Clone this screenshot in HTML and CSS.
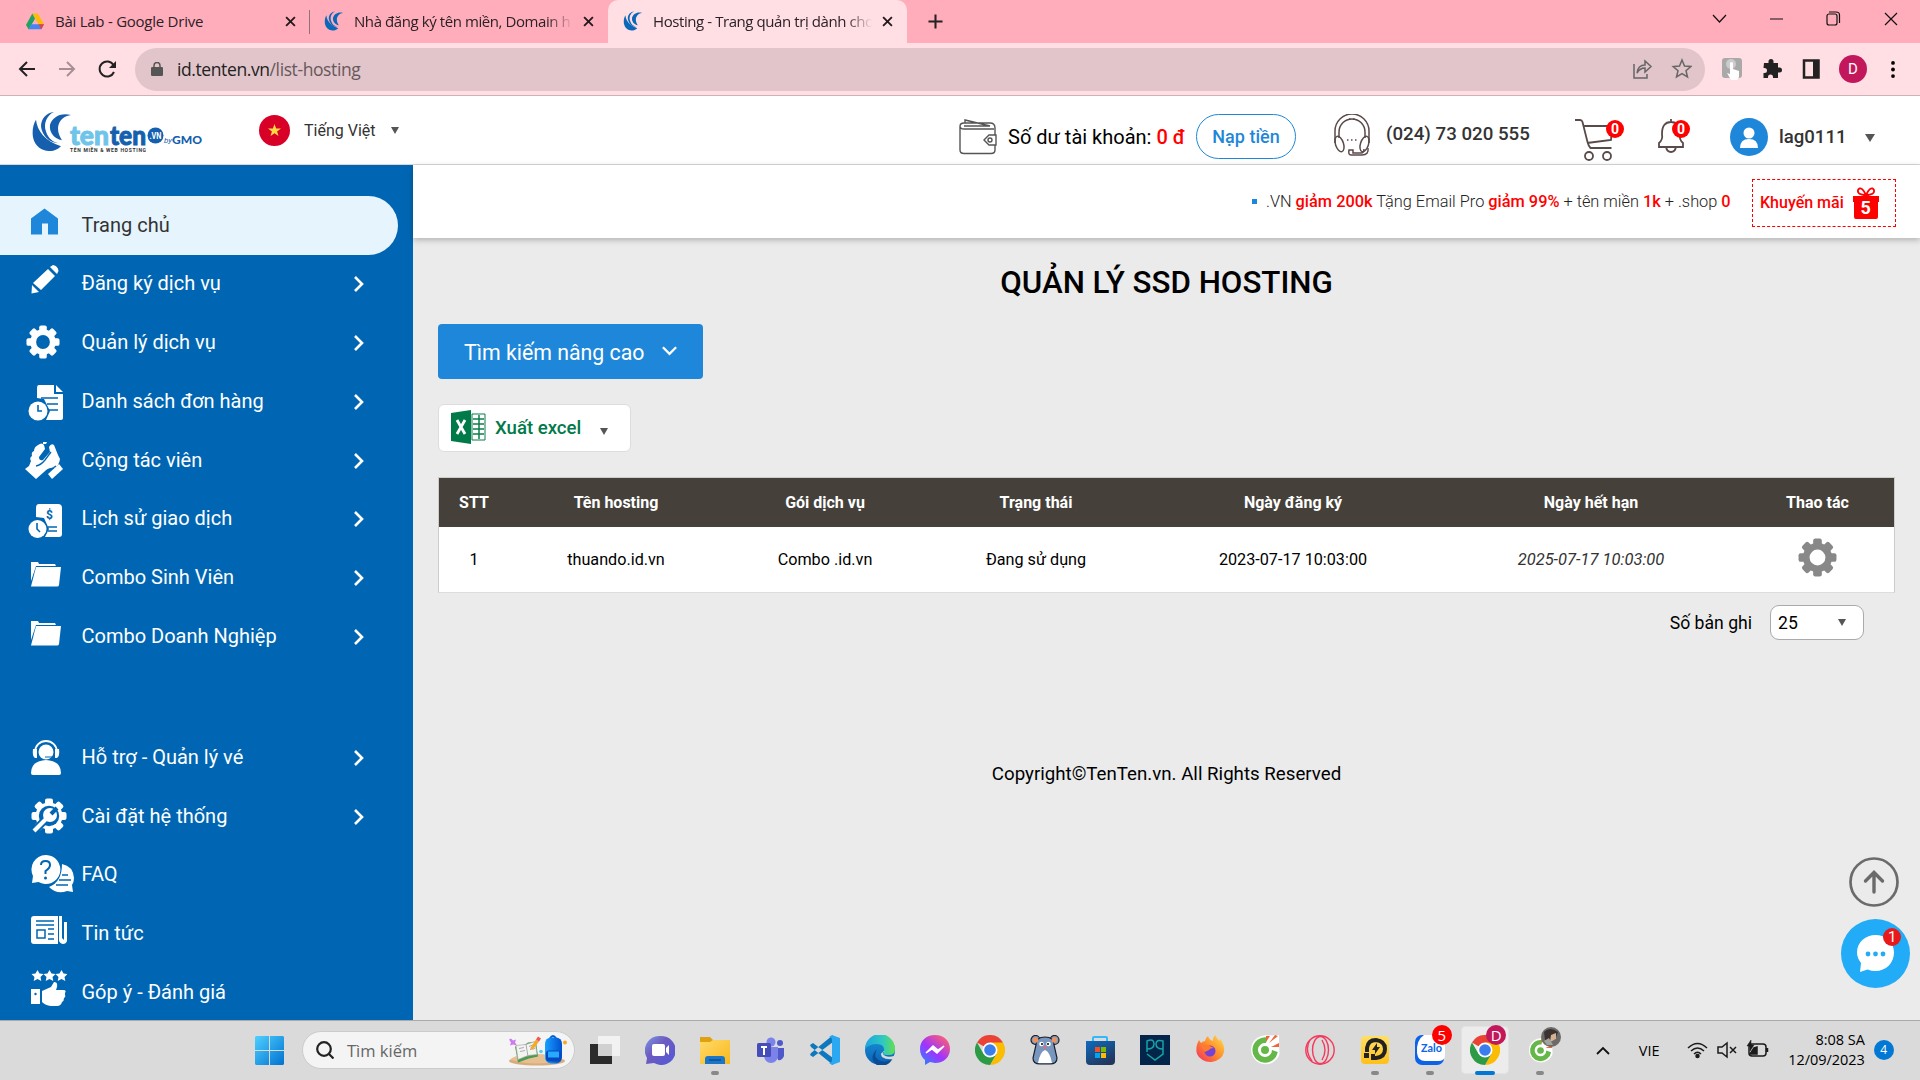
FILE: index.html
```html
<!DOCTYPE html>
<html lang="vi">
<head>
<meta charset="utf-8">
<title>Hosting - Trang quản trị dành cho khách hàng</title>
<link rel="stylesheet" href="styles.css">
</head>
<body>
<svg class="defs" aria-hidden="true">
  <defs>
    <symbol id="swoosh" viewBox="0 0 40 42"><path d="M22 1C15 4 11 13 14 21c2 7 7 11 13 12-10 0-17-8-18-17C9 8 14 2 22 1z"/><path d="M39 4c-9 1-13 8-13 14 0 5 2 9 4 12-8-2-13-8-12-16C20 7 28 1 39 4z"/><path d="M4 9c1 11 9 22 25 27C20 45 4 42 1 27 0 20 1 14 4 9z"/></symbol>
    <symbol id="x" viewBox="0 0 10 10"><path d="M1 1l8 8M9 1L1 9" fill="none" stroke="currentColor" stroke-width="1.7"/></symbol>
    <symbol id="chev" viewBox="0 0 12 18"><path d="M2 2l7 7-7 7" fill="none" stroke="currentColor" stroke-width="2.6"/></symbol>
    <symbol id="cog" viewBox="-18 -18 36 36"><rect x="-4" y="-17.500" width="8" height="35" rx="2"/><rect x="-4" y="-17.500" width="8" height="35" rx="2" transform="rotate(45)"/><rect x="-4" y="-17.500" width="8" height="35" rx="2" transform="rotate(90)"/><rect x="-4" y="-17.500" width="8" height="35" rx="2" transform="rotate(135)"/><circle r="13.500"/><circle r="7.300" fill="var(--hole)"/></symbol>
    <symbol id="folder" viewBox="0 0 30 25"><path d="M0 0h7l1 2h16l1 2H5L0 19z"/><path d="M5 5h25l-2 18q-.2 1.500-2 1.500H0z"/></symbol>
    <symbol id="chrome" viewBox="-15 -15 30 30"><path d="M0 0L-13 -7.500A15 15 0 0 1 13 -7.500z" fill="#ea4335"/><path d="M0 -7.500H13A15 15 0 0 1 0 15L6.500 3.700z" fill="#fbbc04"/><path d="M-6.500 3.700L-13 -7.500A15 15 0 0 0 0 15L6.500 3.700z" fill="#2d9a46"/><circle r="7.500" fill="#fff"/><circle r="5.800" fill="#3b7ded"/></symbol>
    <symbol id="coccoc" viewBox="-15 -15 30 30"><path d="M3-14.500A14.500 14.500 0 1 0 14.500 4L14-6V-15z" fill="#fff"/><path d="M2 -12.500A12.700 12.700 0 1 0 12.700 2L7 0a7 7 0 1 1-6-7z" fill="#65b847"/><circle r="6" fill="#fff"/><circle r="4" fill="#65b847"/><path d="M1-8l0-6 4 0zM4-7l6-8 3 1zM6-3l8-4v4z" fill="#f0663c"/></symbol>
    <linearGradient id="gWin" x2="1" y2="1"><stop stop-color="#4fd0ff"/><stop offset="1" stop-color="#0072d0"/></linearGradient>
    <linearGradient id="gChat" x2="1" y2="1"><stop stop-color="#7b9be4"/><stop offset=".4" stop-color="#6e5bc0"/><stop offset="1" stop-color="#5059d9"/></linearGradient>
    <linearGradient id="gFold" x2="1" y2="1"><stop stop-color="#ffda6a"/><stop offset="1" stop-color="#f9b81c"/></linearGradient>
    <linearGradient id="gMess" x1="0" y1="1" x2=".8" y2="0"><stop stop-color="#1e8cff"/><stop offset=".5" stop-color="#a033ff"/><stop offset="1" stop-color="#ff6070"/></linearGradient>
    <linearGradient id="gEdge" x2="1"><stop stop-color="#1ca5e0"/><stop offset=".6" stop-color="#2fc9c0"/><stop offset="1" stop-color="#64df50"/></linearGradient>
    <linearGradient id="gEdge2" x2="0" y2="1"><stop stop-color="#1a94d8"/><stop offset="1" stop-color="#0a62b5"/></linearGradient>
    <linearGradient id="gStore" x2=".6" y2="1"><stop stop-color="#0d6cc0"/><stop offset="1" stop-color="#22365e"/></linearGradient>
    <linearGradient id="gFox" x1="1" x2="0" y2="1"><stop stop-color="#ffe14a"/><stop offset=".5" stop-color="#ff8a2a"/><stop offset="1" stop-color="#f22a66"/></linearGradient>
    <linearGradient id="gLd" x2="0" y2="1"><stop stop-color="#ffe065"/><stop offset="1" stop-color="#ffc01a"/></linearGradient>
    <linearGradient id="gBag" x2="1"><stop stop-color="#18a0ff"/><stop offset="1" stop-color="#0050d0"/></linearGradient>
  </defs>
</svg>

<header class="browser">
  <div class="tabs">
    <div class="tab tab-first">
      <svg class="fav" viewBox="0 0 20 18"><path d="M7 0h6l7 12h-6z" fill="#fbbc04"/><path d="M7 0l3 6-7 12-3-5z" fill="#1ea362"/><path d="M6 12h14l-3 5.500H3z" fill="#4285f4"/><path d="M14 12h6l-3 5.500z" fill="#ea4335"/></svg>
      <span class="tab-title t1">Bài Lab - Google Drive</span><svg class="tab-x"><use href="#x"/></svg>
    </div>
    <div class="tab tab-second">
      <svg class="fav swoosh"><use href="#swoosh"/></svg>
      <span class="tab-title t2">Nhà đăng ký tên miền, Domain h</span><svg class="tab-x"><use href="#x"/></svg>
    </div>
    <div class="tab tab-active">
      <svg class="fav swoosh"><use href="#swoosh"/></svg>
      <span class="tab-title t3">Hosting - Trang quản trị dành cho</span><svg class="tab-x"><use href="#x"/></svg>
    </div>
    <svg class="new-tab" viewBox="0 0 16 16"><path d="M8 .5v15M.5 8h15" stroke="#222" stroke-width="2.200"/></svg>
    <svg class="win-btns" viewBox="0 0 190 20" fill="none" stroke="#111" stroke-width="1.200"><path d="M1 6l6.500 7L14 6M58 10h13M173 4l12 12M185 4l-12 12"/><rect x="115" y="5" width="10" height="11" rx="2"/><path d="M117 3h7q3.500 0 3.500 3v8"/></svg>
  </div>
  <div class="toolbar">
    <svg class="nav" viewBox="0 0 100 20" fill="none" stroke="#222" stroke-width="2"><path d="M17 10H2M9 3l-7 7 7 7"/><path d="M41 10h15M49 3l7 7-7 7" stroke="#a58f95"/><path d="M95.500 6A7.500 7.500 0 1 0 96 13"/><path d="M98 2v7h-7z" fill="#222" stroke="none"/></svg>
    <div class="omnibox">
      <svg class="lock" viewBox="0 0 12 14"><rect y="5" width="12" height="9" rx="1.200" fill="#555"/><path d="M3 6V3.500a3 3 0 0 1 6 0V6" fill="none" stroke="#555" stroke-width="1.500"/></svg>
      <span class="url">id.tenten.vn<i>/list-hosting</i></span>
      <svg class="omni-icons" viewBox="0 0 60 22" fill="none" stroke="#666" stroke-width="1.500"><path d="M2 6v14h13v-4M5 15q1-8 8-8V3l6 5.500-6 5.500v-4q-5 0-8 5z"/><path d="M50 2l2.500 6 6.300.5-4.800 4.200 1.500 6.300-5.500-3.400-5.500 3.400 1.500-6.300-4.800-4.200 6.300-.5z"/></svg>
    </div>
    <svg class="ext-icons" viewBox="0 0 110 28"><rect x="1" y="3" width="20" height="20" rx="3" fill="#a9a9a9"/><circle cx="10" cy="9" r="5" fill="#ccc"/><path d="M9 8q1.500-2 3 0v6l6 2v6l-2 3h-6l-4-7 3 1z" fill="#fff"/><path d="M43 8h4.500v-1.500a2.500 2.500 0 1 1 5 0V8H57v4.500h1.500a2.500 2.500 0 1 1 0 5H57V23h-5v-1a2.500 2.500 0 0 0-5 0v1h-4.500v-5h1a2.500 2.500 0 0 0 0-5h-1z" fill="#222"/><path d="M83 5.500h14.500v17H83z" fill="none" stroke="#222" stroke-width="2.500"/><path d="M92 5h6v18h-6z" fill="#222"/></svg>
    <span class="profile">D</span>
    <svg class="dots" viewBox="0 0 4 18"><circle cx="2" cy="2" r="2"/><circle cx="2" cy="9" r="2"/><circle cx="2" cy="16" r="2"/></svg>
  </div>
</header>

<div class="site-head">
  <svg class="logo" viewBox="0 0 172 42">
    <svg width="40" height="41" viewBox="0 0 40 42" preserveAspectRatio="none" fill="#155fae"><use href="#swoosh"/></svg>
    <text class="lg-a" x="38" y="34" textLength="39" lengthAdjust="spacingAndGlyphs">ten</text>
    <text class="lg-b" x="78" y="34" textLength="36" lengthAdjust="spacingAndGlyphs">ten</text>
    <circle cx="123.500" cy="24.500" r="8" fill="#155fae"/><text class="lg-vn" x="117.500" y="28" textLength="12" lengthAdjust="spacingAndGlyphs">.VN</text>
    <text class="lg-by" x="132" y="32" textLength="8">by</text><text class="lg-gmo" x="140" y="33" textLength="30" lengthAdjust="spacingAndGlyphs">GMO</text>
    <text class="lg-sub" x="38" y="40.500" textLength="76">TÊN MIỀN &amp; WEB HOSTING</text>
  </svg>
  <svg class="flag" viewBox="0 0 31 31"><circle cx="15.500" cy="15.500" r="15.500" fill="#d80027"/><path d="M15.500 9l1.600 4.600h4.900l-3.900 2.900 1.400 4.600-4-2.800-4 2.800 1.400-4.600L9 13.600h4.900z" fill="#ffda44"/></svg>
  <span class="lang">Tiếng Việt</span><i class="tri"></i>
  <div class="account">
    <svg class="wallet" viewBox="0 0 38 36" fill="none" stroke="#555" stroke-width="1.400"><path d="M36 16V9q0-5-5-5H5Q1 4 1 7.500V31q0 3.500 4 3.500h27q4 0 4-3.500v-5M1 7q0 3 4 3h30M6 4V1l25 6H5"/><path d="M37 16h-7q-5 5-5 5t5 5h7z"/><circle cx="31" cy="21" r="2"/></svg>
    <span class="balance">Số dư tài khoản: <b>0 đ</b></span>
    <span class="topup">Nạp tiền</span>
    <svg class="headset" viewBox="0 0 38 42" fill="none" stroke="#5a4a4a" stroke-width="1.500"><path d="M2 29V17a17 17 0 0 1 34 0v12M6 24v-6a13 13 0 0 1 26 0v6"/><ellipse cx="6.500" cy="30" rx="4" ry="8" transform="rotate(-18 6.500 30)"/><ellipse cx="31.500" cy="30" rx="4" ry="8" transform="rotate(18 31.500 30)"/><path d="M35 34q1 7-6 7H18q-3 0-2-5h4v3h8q3 0 3-4"/><path d="M14 26h11M16 5h7" stroke-dasharray="1.500 2.500"/></svg>
    <span class="phone">(024) 73 020 555</span>
    <span class="ico-badge cart"><svg viewBox="0 0 38 42" fill="none" stroke="#5a4a4a" stroke-width="1.800"><path d="M0 1h5q2 0 2.500 2l5 20q1 4 3 6h21M9 7h28l-1 14-24 3"/><circle cx="14" cy="37" r="4"/><circle cx="32" cy="37" r="4"/></svg><b>0</b></span>
    <span class="ico-badge bell"><svg viewBox="0 0 28 34" fill="none" stroke="#5a4a4a" stroke-width="1.800"><path d="M14 0v3M2 28v-4q4-3 3-9Q5 3 14 3t9 12q-1 6 3 9v4zM9 28q1 5 5 5t5-5"/></svg><b>0</b></span>
    <svg class="avatar" viewBox="0 0 38 38"><circle cx="19" cy="19" r="19" fill="#1f87d9"/><circle cx="19" cy="15" r="5.500" fill="#fff"/><path d="M10 30q0-9 9-9t9 9z" fill="#fff"/></svg>
    <span class="user">lag0111</span><i class="tri"></i>
  </div>
</div>

<div class="body">
  <nav class="side">
    <a class="item active"><svg width="27" height="27" class="i-home" viewBox="0 0 27 26"><path d="M13.500 0L27 10v16H17V15h-6v11H0V10z" fill="#1f87d9"/></svg><span>Trang chủ</span></a>
    <a class="item"><svg class="i-pen" width="28" height="29" viewBox="0 0 28 29"><path d="M2 18L17 4l7 7L10 25zM1 20l7 7-7.500 1.500zM19 2l3-2q5 1 5.500 6L26 9z"/></svg><span>Đăng ký dịch vụ</span><svg class="chev"><use href="#chev"/></svg></a>
    <a class="item"><svg class="i-gear" width="34" height="34"><use href="#cog"/></svg><span>Quản lý dịch vụ</span><svg class="chev"><use href="#chev"/></svg></a>
    <a class="item"><svg class="i-list" width="36" height="36" viewBox="0 0 36 36"><path d="M11 0h15v9h9v24q0 2-2 2H18l4-9-6-12-7-1V3q0-3 2-3zM28 0l7 7h-7z"/><circle cx="10" cy="26" r="9.500"/><path d="M10 20v6h4M13 13h17M19 19h11M21 25h9" stroke="#0066b3" stroke-width="1.600" fill="none"/></svg><span>Danh sách đơn hàng</span><svg class="chev"><use href="#chev"/></svg></a>
    <a class="item"><svg class="i-hands" width="38" height="38" viewBox="0 0 38 38"><path d="M13 3q4-3 6 0l1 4-6 8q0 4 4 3l7-8-1-5q2-4 5-2l4 10 2 4q-1 7-6 9-5-1-10 4l-8 7L0 27l4-3 2-5q-2-3 1-5-1-4 2-5 0-4 4-6z"/><path d="M34 22l4 5-11 10-4-5z"/><path d="M18 0l4 0-1 2-3 0z"/><path d="M11 24q5-1 9-6l6-8M22 30l9-6" stroke="#0066b3" stroke-width="1.300" fill="none"/></svg><span>Cộng tác viên</span><svg class="chev"><use href="#chev"/></svg></a>
    <a class="item"><svg class="i-hist" width="34" height="34" viewBox="0 0 34 34"><path d="M11 0h19q4 0 4 4v26q0 3-3 3H17l4-8-5-11-8-1V4q0-4 3-4z"/><circle cx="9.500" cy="25" r="9"/><path d="M9 19v6l3 3M20 23h9M20 27h9" stroke="#0066b3" stroke-width="1.600" fill="none"/><text x="18" y="15" class="dollar">$</text></svg><span>Lịch sử giao dịch</span><svg class="chev"><use href="#chev"/></svg></a>
    <a class="item"><svg class="i-fold" width="30" height="25"><use href="#folder"/></svg><span>Combo Sinh Viên</span><svg class="chev"><use href="#chev"/></svg></a>
    <a class="item"><svg class="i-fold" width="30" height="25"><use href="#folder"/></svg><span>Combo Doanh Nghiệp</span><svg class="chev"><use href="#chev"/></svg></a>
    <a class="item gap"><svg class="i-sup" width="30" height="36" viewBox="0 0 30 36"><circle cx="15" cy="13" r="7.500"/><path d="M0 34q0-12 15-13 15 1 15 13 0 2-2 2H2q-2 0-2-2z"/><path d="M4 18V13a11 11 0 0 1 22 0v5" fill="none" stroke="#fff" stroke-width="1.800"/><path d="M2 10h4v9H4q-3-2-2-9zM28 10h-4v9h2q3-2 2-9z"/><path d="M14 18h9" stroke="#0066b3"/></svg><span>Hỗ trợ - Quản lý vé</span><svg class="chev"><use href="#chev"/></svg></a>
    <a class="item"><svg class="i-set" width="36" height="36" viewBox="-18 -18 36 36"><use href="#cog" x="-18" y="-18" width="36" height="36"/><circle r="10.200" fill="#0066b3"/><path d="M-15 15L0 0" stroke="#0066b3" stroke-width="8"/><path d="M-15 15L1-1" stroke="#fff" stroke-width="4"/><circle r="7" cx="1" cy="-1"/><path d="M2-2L8-8" stroke="#0066b3" stroke-width="4"/></svg><span>Cài đặt hệ thống</span><svg class="chev"><use href="#chev"/></svg></a>
    <a class="item"><svg class="i-faq" width="43" height="38" viewBox="0 0 43 38"><path d="M31 9q11 2 12 14 0 4-2 7l1 7-6-1q-10 4-18-4 13-5 13-23z"/><path d="M31 20h6M28 25h12M25 30h12" stroke="#0066b3" stroke-width="1.600"/><path d="M14.500 0a14.500 14.500 0 1 1-7 27L1 28l1-7A14.500 14.500 0 0 1 14.500 0z"/><path d="M10 10q0-4 4.500-4t4.500 4q0 3-4.500 6v3" fill="none" stroke="#0066b3" stroke-width="2"/><circle cx="14.500" cy="23" r="1.500" fill="#0066b3"/></svg><span>FAQ</span></a>
    <a class="item"><svg class="i-news" width="36" height="28" viewBox="0 0 36 28"><path d="M3 0h24v28H3q-3 0-3-3V3q0-3 3-3zM28 0h3v22l2 2V6h3v19q-1 3-4 3-4-1-4-4z"/><path d="M5 5h18M5 9h18M17 13h6M17 18h6M17 23h6M6 14h8v8H6z" fill="none" stroke="#0066b3" stroke-width="1.500"/></svg><span>Tin tức</span></a>
    <a class="item"><svg class="i-rate" width="36" height="36" viewBox="0 0 36 36"><path id="star" d="M6.500 0l2 3.500 4 .6-3 2.900.8 4-3.800-2-3.800 2 .8-4-3-2.900 4-.6z"/><use href="#star" x="12"/><use href="#star" x="24"/><path d="M0 19h9v15H0zM11 21l9-4 3-5q4 0 3 5l-1 3h7q4 0 2 3v2q1 2-1 3 0 3-2 4-1 4-5 4-10 1-15-4z"/><circle cx="4.500" cy="24" r="1.200" fill="#0066b3"/></svg><span>Góp ý - Đánh giá</span></a>
  </nav>

  <main>
    <div class="promo">
      <i class="bullet"></i><span class="promo-text">.VN <b>giảm 200k</b> Tặng Email Pro <b>giảm 99%</b> + tên miền <b>1k</b> + .shop <b>0</b></span>
      <div class="promo-box"><span>Khuyến mãi</span><svg viewBox="0 0 26 34"><path d="M13 9Q4 9 5 4q3-5 8 5 5-10 8-5 1 5-8 5zm-1 0l-5 5m7-5l5 5" fill="none" stroke="#f00" stroke-width="1.800"/><path d="M0 10h26v6h-1v15q0 2-2 2H3q-2 0-2-2V16H0z" fill="#f00"/><text x="7.500" y="28">5</text></svg></div>
    </div>
    <h1>QUẢN LÝ SSD HOSTING</h1>
    <div class="search-btn"><span>Tìm kiếm nâng cao</span><svg viewBox="0 0 18 11"><path d="M2 2l7 7 7-7" fill="none" stroke="#fff" stroke-width="2.400"/></svg></div>
    <div class="excel"><svg viewBox="0 0 35 34"><path d="M21 4h13v26H21z" fill="#fff" stroke="#0b7d4a"/><path d="M22 9h11M22 14h11M22 19h11M22 24h11M28 5v24" stroke="#0b7d4a" stroke-width="1.500"/><path d="M0 3L20 0v34L0 31z" fill="#007a48"/><path d="M6 10l8 14M14 10L6 24" stroke="#fff" stroke-width="2.800"/></svg><span>Xuất excel</span><i class="tri"></i></div>
    <div class="table">
      <div class="tr th"><span>STT</span><span>Tên hosting</span><span>Gói dịch vụ</span><span>Trạng thái</span><span>Ngày đăng ký</span><span>Ngày hết hạn</span><span>Thao tác</span></div>
      <div class="tr td"><span>1</span><span>thuando.id.vn</span><span>Combo .id.vn</span><span>Đang sử dụng</span><span>2023-07-17 10:03:00</span><em>2025-07-17 10:03:00</em><span class="act"><svg><use href="#cog"/></svg></span></div>
    </div>
    <div class="pager"><span>Số bản ghi</span><div class="select">25<i class="tri"></i></div></div>
    <footer>Copyright©TenTen.vn. All Rights Reserved</footer>
    <div class="float">
      <svg class="up" viewBox="0 0 50 50" fill="none" stroke="#6b6b6b" stroke-width="2.700"><circle cx="25" cy="25" r="23.500"/><path d="M25 35V16M16.500 24l8.500-8.500 8.500 8.500" stroke-width="3.400" stroke-linecap="round"/></svg>
      <svg class="chat" viewBox="0 0 69 69"><circle cx="34.500" cy="34.500" r="34.500" fill="#22abf7"/><path d="M34.500 16c10 0 18.500 7 18.500 17.500S45 52 34.500 52q-4 0-8-1.500L19 53l1-9q-4-5-4-10.500C16 23 25 16 34.500 16z" fill="#fff"/><g fill="#22abf7"><circle cx="27" cy="35" r="2.400"/><circle cx="34.500" cy="35" r="2.400"/><circle cx="42" cy="35" r="2.400"/></g><circle cx="51" cy="18" r="9" fill="#e91919"/><text x="47" y="23">1</text></svg>
    </div>
  </main>
</div>

<div class="taskbar">
  <svg class="start" viewBox="0 0 29 29" fill="url(#gWin)"><path d="M1 0h13v14H0V1zM15 0h13l1 1v13H15zM0 15h14v14H1l-1-1zM15 15h14v13l-1 1H15z"/></svg>
  <div class="search"><svg class="mag" viewBox="0 0 18 18" fill="none" stroke="#222" stroke-width="2.200"><circle cx="8" cy="8" r="6.800"/><path d="M13 13l4.500 4.500"/></svg><span>Tìm kiếm</span>
    <svg class="art" viewBox="0 0 60 30"><ellipse cx="29" cy="25.500" rx="28" ry="4.500" fill="#d9ac7c"/><path d="M2 24q4-4 16-5 22-2 38 5-28 8-54 0z" fill="#e6bf92"/><path d="M7 11l10-2 3-2 8-1 2 15-9 2-11 4z" fill="#4c9a50"/><path d="M8 10l10-1 9-3 2 13-9 1-10 4z" fill="#f4f4ee" stroke="#a7afb0" stroke-width=".7"/><path d="M18 9l2 12M11 13l5-1M12 16l5-1M21 11l5-2M22 14l5-1" stroke="#aab" fill="none"/><path d="M22 13l6-9 3 2-6 8z" fill="#f8a928"/><path d="M28 4l2-3 3 2-2 3z" fill="#e55"/><path d="M42 3q3-5 6 0" stroke="#0060d0" stroke-width="2" fill="none"/><rect x="37" y="2" width="17" height="26" rx="6" fill="url(#gBag)"/><rect x="38" y="15" width="15" height="11" rx="3" fill="#0648c0"/><path d="M40 16h11v6H40z" fill="#27a9ff"/><circle cx="33" cy="16" r="1.800" fill="#56cdf0"/><circle cx="57" cy="7" r="2" fill="#f9a825"/><path d="M3 3l2 2 3-1-1 3 2 3-4-1-3 1 1-3-2-3z" fill="#cf7af0"/></svg></div>
  <div class="apps">
    <span class="app"><svg viewBox="0 0 30 30"><path d="M0 9h22v20H0z" fill="#2b2b2b"/><path d="M8 1h22v20H8z" fill="#f6f6f6" opacity=".82"/></svg></span>
    <span class="app"><svg viewBox="0 0 30 30"><path d="M15 1a14.500 14.500 0 1 1-6 27l-8 1 1-6A14.500 14.500 0 0 1 15 1z" fill="url(#gChat)"/><rect x="7" y="9" width="13" height="12" rx="2" fill="#fff"/><path d="M21 13l3-3v10l-3-3z" fill="#fff"/></svg></span>
    <span class="app run"><svg viewBox="0 0 30 30"><path d="M0 2h10l3 3h17v8H0z" fill="#e0a010"/><path d="M0 7h10l3-2h17v24H0z" fill="url(#gFold)"/><path d="M5 29v-5q0-3 3-3h14q3 0 3 3v5z" fill="#1c76c8"/><path d="M9 25h12" stroke="#0a4f90" stroke-width="1.500"/></svg></span>
    <span class="app"><svg viewBox="0 0 30 30"><circle cx="16" cy="7" r="4.500" fill="#7b83eb"/><circle cx="25" cy="8" r="3" fill="#5059c9"/><path d="M19 13h10v8q-2 5-6 4z" fill="#5059c9"/><path d="M9 12h14v9q-1 7-7 7t-7-7z" fill="#7b83eb"/><rect x="2" y="8" width="14" height="14" rx="1.500" fill="#454eb8"/><path d="M6 12h6M9 12v8" stroke="#fff" stroke-width="2"/></svg></span>
    <span class="app"><svg viewBox="0 0 30 30"><path d="M0 10l3-2 20 15v7L1 12zM0 20l3 2L23 7V0L1 18z" fill="#0e78be"/><path d="M22 0l8 3v24l-8 3-3-2q3 0 3-3V5q0-3-3-3z" fill="#2aa8f2"/></svg></span>
    <span class="app"><svg viewBox="0 0 30 30"><circle cx="15" cy="15" r="15" fill="url(#gEdge2)"/><path d="M0 14A15 15 0 0 1 30 14q0 6-6 6-8 0-5-3 1-8-7-8Q4 9 0 14z" fill="url(#gEdge)"/><path d="M12 14q-5 9 4 12 7 2 12-3-5 10-16 7-9-7 0-16z" fill="#0c4c94"/><path d="M20 17q-3-2-2 2 3 4 11 2l1-1v3l-1 1q-8 1-12-2-3-5 3-5z" fill="#dadada"/></svg></span>
    <span class="app"><svg viewBox="0 0 30 30"><path d="M15 0c9 0 15 6 15 14s-6 14-15 14l-5-1-5 3v-5Q0 21 0 14C0 6 6 0 15 0z" fill="url(#gMess)"/><path d="M6 18l7-7 5 4 6-4-7 7-5-4z" fill="#fff" stroke="#fff" stroke-width="1.500"/></svg></span>
    <span class="app"><svg><use href="#chrome"/></svg></span>
    <span class="app"><svg viewBox="0 0 30 30" stroke="#16202e" stroke-width="1.200"><circle cx="5.500" cy="5" r="4.500" fill="#7b9cc0"/><circle cx="24.500" cy="5" r="4.500" fill="#7b9cc0"/><path d="M15 2q9 0 9 8l3 13q0 6-7 6h-10q-7 0-7-6L6 10q0-8 9-8z" fill="#7997bd"/><path d="M15 15q5 2 7 13H8q2-11 7-13z" fill="#fff" stroke="none"/><g stroke="none"><circle cx="5.500" cy="5" r="2.800" fill="#f09060"/><circle cx="24.500" cy="5" r="2.800" fill="#f09060"/><circle cx="11.500" cy="9" r="2.300" fill="#fff"/><circle cx="18.500" cy="9" r="2.300" fill="#fff"/><circle cx="12" cy="9" r="1"/><circle cx="18" cy="9" r="1"/><circle cx="15" cy="12.500" r="1.500" fill="#e76a7a"/></g></svg></span>
    <span class="app"><svg viewBox="0 0 30 30"><path d="M8 7V3q0-1 1-1h12q1 0 1 1v4" fill="none" stroke="#35b8f5" stroke-width="2"/><path d="M1 6h29v20q0 4-4 4H5q-4 0-4-4z" fill="url(#gStore)"/><path d="M10 12h5v5h-5z" fill="#f25022"/><path d="M16 12h5v5h-5z" fill="#7fba00"/><path d="M10 18h5v5h-5z" fill="#00a4ef"/><path d="M16 18h5v5h-5z" fill="#ffb900"/></svg></span>
    <span class="app"><svg viewBox="0 0 30 30"><path d="M0 0h30v30H0z" fill="#03254a"/><path d="M7 17V6q7-3 7 3 0 5-7 5M23 14q-7 0-7-5 0-5 7-3v13l-8 6-8-6" fill="none" stroke="#16a3a8" stroke-width="1.500"/></svg></span>
    <span class="app"><svg viewBox="0 0 30 30"><path d="M4 5l2 3q2-2 4-2 1-4 3-5 1 4 5 5 0-4 2-6l4 6 1-2q5 6 4 13a14 12 0 0 1-27 2Q0 12 4 5z" fill="url(#gFox)"/><circle cx="15" cy="16" r="5.500" fill="#7542d8"/><path d="M5 10q6-1 10 1l4 2q-4 0-5 2l-4 2z" fill="#ff7a30"/></svg></span>
    <span class="app"><svg><use href="#coccoc"/></svg></span>
    <span class="app"><svg viewBox="0 0 30 30" fill="none" stroke="#f5385c" stroke-width="1.400"><circle cx="15" cy="15" r="14.200"/><ellipse cx="15.500" cy="15" rx="8" ry="13.500"/><path d="M17 5q6 10 0 20M5 5q-6 10 2 21"/></svg></span>
    <span class="app run"><svg viewBox="0 0 30 30"><rect x="1" y="1" width="28" height="28" rx="4" fill="url(#gLd)"/><path d="M7 17v-4q1-8 9-8 9 1 9 9 0 8-9 9h-3v-4" fill="none" stroke="#222" stroke-width="4"/><path d="M4 18h5v5H4zM17 8l-5 7h3v4l5-7h-3z" fill="#222"/></svg></span>
    <span class="app run zalo"><svg viewBox="0 0 30 30"><rect width="29" height="30" rx="7" fill="#0a63e8"/><path d="M9 0h14q7 0 7 7v13q0 6-7 6H10q-7 0-8-8Q1 5 9 0z" fill="#fff"/><text class="zalo-t" x="6" y="17" textLength="21" lengthAdjust="spacingAndGlyphs">Zalo</text></svg><b class="cnt">5</b></span>
    <span class="app run sel"><svg><use href="#chrome"/></svg><b class="cnt d">D</b></span>
    <span class="app run cc2"><svg><use href="#coccoc"/></svg><svg class="pic" viewBox="0 0 20 20"><circle cx="10" cy="10" r="10" fill="#6d6b69"/><path d="M3 5q6-6 14 0l-3 8H4z" fill="#3b3332"/><path d="M10 8l5-2v6l-6 3z" fill="#d5b391"/><path d="M3 14l5-3 4 7H6z" fill="#a0a49f"/></svg></span>
  </div>
  <svg class="tray-up" viewBox="0 0 14 9"><path d="M1 8l6-6 6 6" fill="none" stroke="#111" stroke-width="1.800"/></svg>
  <span class="vie">VIE</span>
  <svg class="tray" viewBox="0 0 82 20" fill="none" stroke="#1b1b1b" stroke-width="1.500"><path d="M1 8q9.500-9 19 0M4 11q6.500-6 13 0M7 14q3.500-3.500 7 0"/><circle cx="10.500" cy="16" r="1.500" fill="#1b1b1b"/><path d="M31 7h4l5-4v14l-5-4h-4zM43 7l6 6M49 7l-6 6"/><rect x="62" y="4" width="17" height="12" rx="3"/><path d="M80 8v4" stroke-width="2.500"/><path d="M63 14h7V7l-3 1z" fill="#1b1b1b"/><path d="M64 0l-4 6h3v5l4-6h-3z" fill="#1b1b1b" stroke-width=".5"/></svg>
  <div class="clock"><span>8:08 SA</span><span>12/09/2023</span></div>
  <b class="noti">4</b>
</div>
</body>
</html>
```
FILE: styles.css
```css
* { box-sizing: border-box; }
body { margin: 0; width: 1920px; height: 1080px; overflow: hidden; display: flex; flex-direction: column; font-family: Roboto, sans-serif; color: #000; background: #ebebeb; --hole: #0066b3; }
svg { display: block; flex: none; }
span, b, i { flex: none; white-space: nowrap; }
.defs { width: 0; height: 0; position: absolute; }
.tri { width: 0; height: 0; border: 5px solid transparent; border-top: 8px solid #555; border-bottom: 0; }

.browser { height: 96px; border-bottom: 1px solid #cdb3b9; background: #ffdee4; font-family: "Open Sans", "Noto Sans", sans-serif; }
.tabs { height: 43px; background: #ffadbb; display: flex; align-items: center; padding-right: 24px; }
.tab { display: flex; align-items: center; height: 43px; font-size: 15px; color: #2a2226; padding-bottom: 1px; }
.tab-first { width: 310px; padding-left: 26px; background: linear-gradient(#93707a, #93707a) right center / 1px 24px no-repeat; }
.tab-second { width: 298px; padding-left: 14px; }
.tab-active { width: 299px; padding-left: 15px; background: #ffdee4; border-radius: 10px 10px 0 0; }
.fav { width: 18px; height: 17px; margin-right: 11px; }
.fav.swoosh { width: 20px; height: 20px; margin-right: 10px; fill: #0b68b8; }
.tab-title { width: 219px; letter-spacing: -.42px; padding-bottom: 1px; }
.t1 { width: 228px; letter-spacing: -.25px; }
.t2, .t3 { -webkit-mask-image: linear-gradient(90deg, #000 88%, transparent); mask-image: linear-gradient(90deg, #000 88%, transparent); }
.tab-x { width: 11px; height: 11px; color: #221a1d; margin-left: auto; margin-right: 14px; }
.new-tab { width: 15px; height: 15px; margin-left: 21px; }
.win-btns { width: 190px; height: 20px; margin: -5px -6px 0 auto; }
.toolbar { height: 52px; display: flex; align-items: center; padding-left: 18px; }
.nav { width: 100px; height: 20px; }
.omnibox { margin-left: 17px; width: 1570px; height: 43px; border-radius: 22px; background: #e1c5ca; display: flex; align-items: center; padding: 0 13px 0 16px; }
.lock { width: 12px; height: 14px; margin: 0 14px 0 0; }
.url { font-size: 17.500px; color: #222; letter-spacing: -.4px; }
.url i { font-style: normal; color: #66585c; }
.omni-icons { width: 60px; height: 22px; margin-left: auto; }
.ext-icons { width: 110px; height: 28px; margin-left: 16px; }
.profile { width: 28px; height: 28px; border-radius: 50%; background: #c2185b; color: #fff; margin-left: 8px; font: 15px/28px Roboto, sans-serif; text-align: center; }
.dots { width: 4px; height: 17px; margin-left: 24px; }

.site-head { height: 69px; background: #fff; border-bottom: 1px solid #d9d9d9; display: flex; padding-left: 32px; }
.logo { width: 172px; height: 42px; margin-top: 15px; }
.lg-a, .lg-b { font: 900 27px Lato, sans-serif; fill: #6fc4ea; stroke: #6fc4ea; }
.lg-b { fill: #155fae; stroke: #155fae; }
.lg-vn { font: bold 9px Roboto, sans-serif; fill: #fff; }
.lg-by { font: italic 8px Roboto, sans-serif; fill: #155fae; }
.lg-gmo { font: 900 11px Lato, sans-serif; fill: #155fae; }
.lg-sub { font: bold 5px Roboto, sans-serif; fill: #333; }
.flag { width: 31px; height: 31px; margin: 19px 0 0 55px; }
.lang { font-size: 16px; color: #333; margin: 25px 15px 0 14px; }
.site-head > .tri { margin-top: 31px; border-width: 7px 4.500px 0; }
.account { margin-left: auto; padding-right: 45px; display: flex; font-size: 20px; }
.wallet { width: 38px; height: 36px; margin: 23px 11px 0 0; }
.balance { margin-top: 29px; width: 188px; }
.balance b { color: #f00; font-weight: 500; }
.topup { width: 100px; height: 45px; border: 1px solid #1f87d9; border-radius: 23px; margin-top: 18px; color: #1f87d9; font-size: 18px; font-weight: 500; line-height: 43px; text-align: center; }
.headset { width: 38px; height: 42px; margin: 18px 0 0 37px; }
.phone { margin: 27px 0 0 15px; width: 189px; font-weight: 500; color: #333; font-size: 18.700px; }
.ico-badge { position: relative; }
.ico-badge b { position: absolute; width: 18px; height: 18px; border-radius: 50%; background: #f00; color: #fff; font-size: 14px; line-height: 18px; text-align: center; }
.cart svg { width: 38px; height: 42px; margin-top: 23px; }
.cart b { left: 31px; top: 24px; }
.bell { margin-left: 44px; }
.bell svg { width: 28px; height: 34px; margin-top: 23px; }
.bell b { left: 15px; top: 24px; }
.avatar { width: 38px; height: 38px; margin: 22px 11px 0 45px; }
.user { margin-top: 30px; width: 86px; color: #333; font-weight: 500; font-size: 18.600px; }
.account .tri { margin-top: 38px; }

.body { height: 855px; display: flex; }
.side { width: 413px; background: #0066b3; padding-top: 31px; fill: #fff; }
.item { height: 58.800px; width: 398px; display: flex; align-items: center; color: #fff; font-size: 20px; padding-right: 33px; }
.item.active + .item { margin-top: -1px; }
.item > svg:first-child { margin-left: 31px; }
.item span { position: absolute; left: 81.500px; }
.item.active { background: #e6f4fe; color: #333; border-radius: 0 30px 30px 0; }
.item.gap { margin-top: 62px; }
.item > .i-home { margin-bottom: 7px; }
.item > .i-pen { margin-bottom: 7px; }
.item > svg.i-gear { margin-left: 26px; }
.item > svg.i-list { margin: 5px 0 0 28px; }
.item > svg.i-hands { margin: 2px 0 0 25px; }
.item > svg.i-hist { margin: 5px 0 0 28px; }
.item > .i-fold { margin-bottom: 5px; }
.item > svg.i-set { margin-left: 31px; }
.item > .i-news { margin-bottom: 6px; }
.item > .i-rate { margin-bottom: 8px; }
.dollar { font: bold 12px Roboto, sans-serif; fill: #0066b3; }
.chev { width: 12px; height: 18px; color: #fff; margin-left: auto; position: relative; top: 1px; }

main { flex: 1; position: relative; display: flex; flex-direction: column; align-items: flex-start; padding-left: 25px; }
.promo { align-self: stretch; margin-left: -25px; height: 73px; background: #fff; box-shadow: 0 2px 6px rgba(0,0,0,.25); display: flex; align-items: center; justify-content: flex-end; padding-right: 24px; }
.bullet { width: 5px; height: 5px; background: #1f87d9; margin-right: 9px; }
.promo-text { font-size: 16.350px; width: 465px; color: #222; font-weight: 300; }
.promo-text b { color: #f00; font-weight: 500; }
.promo-box { margin: 2px 0 0 21px; width: 144px; height: 48px; border: 1px dashed #f00; display: flex; align-items: center; padding-left: 7px; color: #f00; font-weight: 500; font-size: 16px; }
.promo-box span { width: 93px; }
.promo-box svg { width: 26px; height: 34px; }
.promo-box text { font: bold 18px Roboto, sans-serif; fill: #fff; }
h1 { align-self: stretch; margin: 27px 0 0 -25px; text-align: center; font-size: 31.300px; line-height: 36px; font-weight: 500; }
.search-btn { margin-top: 23px; width: 265px; height: 55px; border-radius: 4px; background: #1f87d9; color: #fff; display: flex; align-items: center; padding-left: 26px; font-size: 21.300px; }
.search-btn span { width: 197px; padding-top: 2px; }
.search-btn svg { width: 17px; height: 11px; margin-bottom: 3px; }
.excel { margin-top: 25px; width: 193px; height: 48px; background: #fff; border: 1px solid #ddd; border-radius: 6px; display: flex; align-items: center; padding-left: 12px; color: #007a48; font-weight: 500; font-size: 18.600px; }
.excel svg { width: 35px; height: 34px; margin-right: 9px; margin-bottom: 2px; }
.excel span { width: 105px; }
.excel .tri, .select .tri { border-width: 7px 4px 0; margin-top: 6px; }
.table { margin-top: 25px; width: 1457px; border: 1px solid #ccc; border-bottom-color: #ddd; background: #fff; font-size: 16.200px; }
.tr { display: grid; grid-template-columns: 70px 214px 204px 218px 296px 300px 153px; align-items: center; text-align: center; }
.th { height: 49px; background: #45413a; color: #fff; font-weight: bold; font-size: 16px; }
.td { height: 65px; padding-bottom: 1px; }
.td em { color: #333; font-size: 16.500px; }
.act { --hole: #fff; }
.act svg { width: 39px; height: 39px; fill: #888; margin: -4px auto 0; }
.pager { margin: 12px 56px 0 0; align-self: flex-end; display: flex; align-items: center; font-size: 17.600px; }
.select { margin-left: 18px; width: 94px; height: 35px; background: #fff; border: 1px solid #aaa; border-radius: 9px; display: flex; align-items: center; justify-content: space-between; padding: 0 17px 0 7px; }
.select .tri { margin-top: 0; }
footer { align-self: stretch; margin: 123px 0 0 -25px; text-align: center; font-size: 18.700px; line-height: 22px; }
.float { position: absolute; right: 10px; bottom: 32px; display: flex; flex-direction: column; align-items: center; gap: 12px; }
.up { width: 50px; height: 50px; margin-right: 4px; }
.chat { width: 69px; height: 69px; }
.chat text { font: 15px Roboto, sans-serif; fill: #fff; }

.taskbar { height: 60px; background: #dadada; border-top: 1px solid #aaa; display: flex; align-items: center; padding: 0 0 1px 255px; font-family: "Open Sans", "Noto Sans", sans-serif; }
.start { width: 29px; height: 29px; }
.search { margin-left: 18px; width: 273px; height: 38px; border-radius: 19px; background: #f4f4f4; border: 1px solid #ccc; display: flex; align-items: center; padding: 0 6px 0 13px; font-size: 16.500px; color: #666; }
.mag { width: 18px; height: 18px; margin-right: 13px; }
.art { width: 60px; height: 31px; margin-left: auto; }
.apps { display: flex; margin-left: 2px; }
.app { width: 55.050px; height: 48px; display: flex; align-items: center; justify-content: center; position: relative; }
.app > svg { width: 30px; height: 30px; }
.run::after { content: ""; position: absolute; bottom: -1px; width: 8px; height: 4px; border-radius: 2px; background: #888; }
.sel { background: #ececec; box-shadow: inset 0 0 0 1px #e2e2e2; border-radius: 5px; width: 48px; margin: 0 3.500px; }
.sel::after { width: 20px; background: #0078d4; }
.cnt { position: absolute; left: 29px; top: -1px; width: 20px; height: 20px; border-radius: 50%; background: #f00; color: #fff; font-size: 15px; font-weight: 500; line-height: 20px; text-align: center; }
.cnt.d { background: #c2185b; left: 25px; top: 3px; }
.cnt.d { top: -1px; }
.zalo-t { font: bold 11px Lato, sans-serif; fill: #0a63e8; }
.cc2 > svg { width: 25px; height: 25px; }
.cc2 > svg.pic { position: absolute; width: 20px; height: 20px; left: 28px; top: 1px; }
.tray-up { width: 14px; height: 9px; margin-left: 28px; }
.vie { width: 26px; margin-left: 29px; font-size: 14.500px; }
.tray { width: 82px; height: 20px; margin-left: 22px; }
.clock { width: 90px; margin-left: 6px; display: flex; flex-direction: column; text-align: right; font-size: 14.500px; line-height: 20px; letter-spacing: -.05px; }
.noti { width: 20px; height: 20px; border-radius: 50%; background: #0078d4; color: #fff; font-size: 12px; font-weight: 500; line-height: 20px; text-align: center; margin-left: 9px; }
```
